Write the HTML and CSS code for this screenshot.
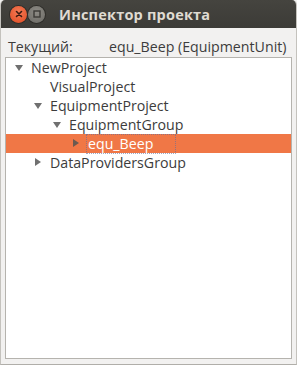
FILE: index.html
```html
<!DOCTYPE html>
<html lang="ru">
<head>
    <meta charset="UTF-8">
    <title>Инспектор проекта</title>
    <link rel="stylesheet" href="styles.css">
</head>
<body>
    <div class="window">
        <div class="titlebar">
            <span class="btn close"><svg width="16" height="16" viewBox="0 0 16 16"><path d="M5.5 5.5 L10.5 10.5 M10.5 5.5 L5.5 10.5" stroke="#3a1a10" stroke-width="1.6" stroke-linecap="round"/></svg></span>
            <span class="btn max"><svg width="16" height="16" viewBox="0 0 16 16"><rect x="5" y="5" width="6" height="6" fill="none" stroke="#3c3b37" stroke-width="1.4"/></svg></span>
            <span class="title">Инспектор проекта</span>
        </div>

        <div class="content">
            <div class="current">
                <span class="label">Текущий:</span>
                <span class="value">equ_Beep (EquipmentUnit)</span>
            </div>

            <div class="tree">
                <div class="row lvl0"><span class="exp down"></span><span class="name">NewProject</span></div>
                <div class="row lvl1"><span class="exp"></span><span class="name">VisualProject</span></div>
                <div class="row lvl1"><span class="exp down"></span><span class="name">EquipmentProject</span></div>
                <div class="row lvl2"><span class="exp down"></span><span class="name">EquipmentGroup</span></div>
                <div class="row lvl3 selected"><span class="exp right"></span><span class="name focus">equ_Beep</span></div>
                <div class="row lvl1"><span class="exp right"></span><span class="name">DataProvidersGroup</span></div>
            </div>
        </div>
    </div>
</body>
</html>
```

FILE: styles.css
```css
body {
    margin: 0;
    background: #f2f1f0;
    font-family: "Open Sans", "DejaVu Sans", sans-serif;
    font-size: 14.2px;
    color: #3c3c3c;
}

.window {
    width: 297px;
    height: 365px;
    box-sizing: border-box;
    background: #f2f1f0;
    border-left: 1px solid #c4c2bd;
    border-right: 1px solid #c4c2bd;
    border-bottom: 1px solid #b0aea9;
    border-radius: 5px 5px 0 0;
    overflow: hidden;
}

.titlebar {
    height: 28px;
    background: linear-gradient(#45443f, #3c3b37);
    display: flex;
    align-items: center;
    padding-left: 10px;
    margin: 0 -1px;
}

.btn {
    width: 17px;
    height: 17px;
    border-radius: 50%;
    display: flex;
    align-items: center;
    justify-content: center;
    margin-right: 1px;
}

.btn svg {
    display: block;
}

.close {
    background: radial-gradient(circle at 50% 35%, #f47a55, #df4a21);
    box-shadow: 0 0 0 1px #2e2d29;
}

.max {
    background: radial-gradient(circle at 50% 35%, #8d8b85, #6a6964);
    box-shadow: 0 0 0 1px #2e2d29;
}

.title {
    margin-left: 13px;
    font-weight: bold;
    font-size: 14.5px;
    color: #dfdbd2;
    letter-spacing: 0.2px;
}

.content {
    padding: 7px 4px 0 4px;
}

.current {
    display: flex;
    height: 22px;
    align-items: center;
    padding-left: 3px;
}

.label {
    width: 101px;
}

.tree {
    height: 302px;
    box-sizing: border-box;
    border: 1px solid #b5b3ae;
    background: #fff;
}

.row {
    height: 19px;
    display: flex;
    align-items: center;
}

.lvl0 { padding-left: 3px; }
.lvl1 { padding-left: 22px; }
.lvl2 { padding-left: 41px; }
.lvl3 { padding-left: 60px; }

.exp {
    width: 19px;
    height: 19px;
    position: relative;
    flex: none;
}

.exp.down::after,
.exp.right::after {
    content: "";
    position: absolute;
    width: 0;
    height: 0;
}

.exp.down::after {
    left: 6px;
    top: 7px;
    border-left: 4px solid transparent;
    border-right: 4px solid transparent;
    border-top: 6px solid #707070;
}

.exp.right::after {
    left: 7px;
    top: 5px;
    border-top: 4px solid transparent;
    border-bottom: 4px solid transparent;
    border-left: 6px solid #707070;
}

.name {
    margin-left: 2px;
    padding: 0 1px;
    line-height: 18px;
}

.selected {
    background: #f07746;
    color: #fff;
}

.selected .exp.right::after {
    border-left-color: #6b5a50;
}

.focus {
    outline: 1px dotted rgba(90, 110, 160, 0.6);
    padding-right: 22px;
}
```
